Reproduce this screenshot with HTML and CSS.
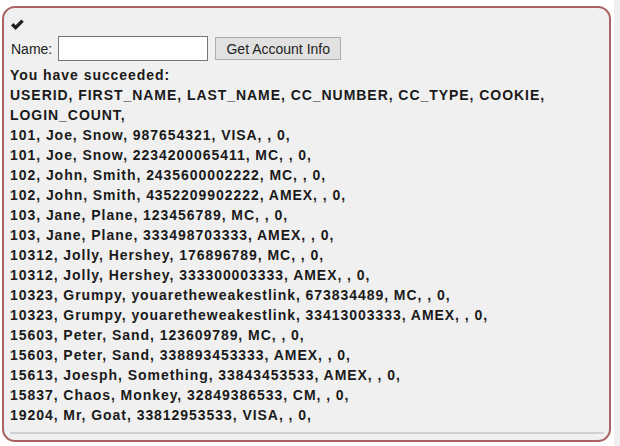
FILE: index.html
```html
<!DOCTYPE html>
<html>
<head>
<meta charset="utf-8">
<link rel="stylesheet" href="styles.css">
</head>
<body>
<div class="page">
  <div class="box">
    <div class="icon-row">
      <svg class="check" width="13" height="11" viewBox="0 0 13 11"><path d="M1.2 5.2 L4.6 8.6 L11.6 1.6" fill="none" stroke="#1e1e1e" stroke-width="3.4" stroke-linejoin="miter" stroke-linecap="butt"/></svg>
    </div>
    <form class="form">
      <label class="label">Name:</label>
      <input class="field" type="text">
      <button class="btn" type="button">Get Account Info</button>
    </form>
    <div class="output">
      <p>You have succeeded:</p>
      <p>USERID, FIRST_NAME, LAST_NAME, CC_NUMBER, CC_TYPE, COOKIE, LOGIN_COUNT,</p>
      <p>101, Joe, Snow, 987654321, VISA, , 0,</p>
      <p>101, Joe, Snow, 2234200065411, MC, , 0,</p>
      <p>102, John, Smith, 2435600002222, MC, , 0,</p>
      <p>102, John, Smith, 4352209902222, AMEX, , 0,</p>
      <p>103, Jane, Plane, 123456789, MC, , 0,</p>
      <p>103, Jane, Plane, 333498703333, AMEX, , 0,</p>
      <p>10312, Jolly, Hershey, 176896789, MC, , 0,</p>
      <p>10312, Jolly, Hershey, 333300003333, AMEX, , 0,</p>
      <p>10323, Grumpy, youaretheweakestlink, 673834489, MC, , 0,</p>
      <p>10323, Grumpy, youaretheweakestlink, 33413003333, AMEX, , 0,</p>
      <p>15603, Peter, Sand, 123609789, MC, , 0,</p>
      <p>15603, Peter, Sand, 338893453333, AMEX, , 0,</p>
      <p>15613, Joesph, Something, 33843453533, AMEX, , 0,</p>
      <p>15837, Chaos, Monkey, 32849386533, CM, , 0,</p>
      <p>19204, Mr, Goat, 33812953533, VISA, , 0,</p>
    </div>
    <hr class="rule">
  </div>
  <div class="strip"></div>
</div>
</body>
</html>
```

FILE: styles.css
```css
html, body {
  margin: 0;
  padding: 0;
  background: #fff;
}
body {
  font-family: "Liberation Sans", Arial, sans-serif;
  font-size: 14px;
  color: #1e1e1e;
}
.page {
  display: flex;
  align-items: flex-start;
  height: 446px;
  padding-left: 2px;
}
.box {
  width: 609px;
  margin-top: 6px;
  border: 2px solid #aa6262;
  border-radius: 13px;
  background: #f0f0f0;
  padding: 0 5px 0 6px;
  box-sizing: border-box;
  height: 436px;
}
.icon-row {
  height: 22px;
  display: flex;
  align-items: flex-end;
  padding-left: 1px;
}
.check {
  display: block;
  margin-bottom: 0;
}
.form {
  display: flex;
  align-items: center;
  margin: 6px 0 0 1px;
  height: 25px;
}
.label {
  color: #222;
  margin-right: 6px;
}
.field {
  width: 150px;
  height: 25px;
  box-sizing: border-box;
  border: 1px solid #767676;
  background: #fff;
  margin: 0 7px 0 0;
  padding: 0;
}
.btn {
  height: 23px;
  width: 126px;
  box-sizing: border-box;
  border: 1px solid #adadad;
  background: #e1e1e1;
  font-family: "Liberation Sans", Arial, sans-serif;
  font-size: 14px;
  color: #222;
  padding: 0;
  margin: 0;
}
.output {
  margin-top: 4px;
  font-weight: bold;
  line-height: 20px;
  letter-spacing: 0.95px;
  color: #1a1a1a;
}
.output p {
  margin: 0;
}
.rule {
  margin: 7px 0 0 0;
  border: 0;
  border-top: 2px solid #d0d0d0;
  height: 0;
}
.strip {
  margin-left: 3px;
  width: 6px;
  height: 446px;
  background: #f0f0f0;
}
```
